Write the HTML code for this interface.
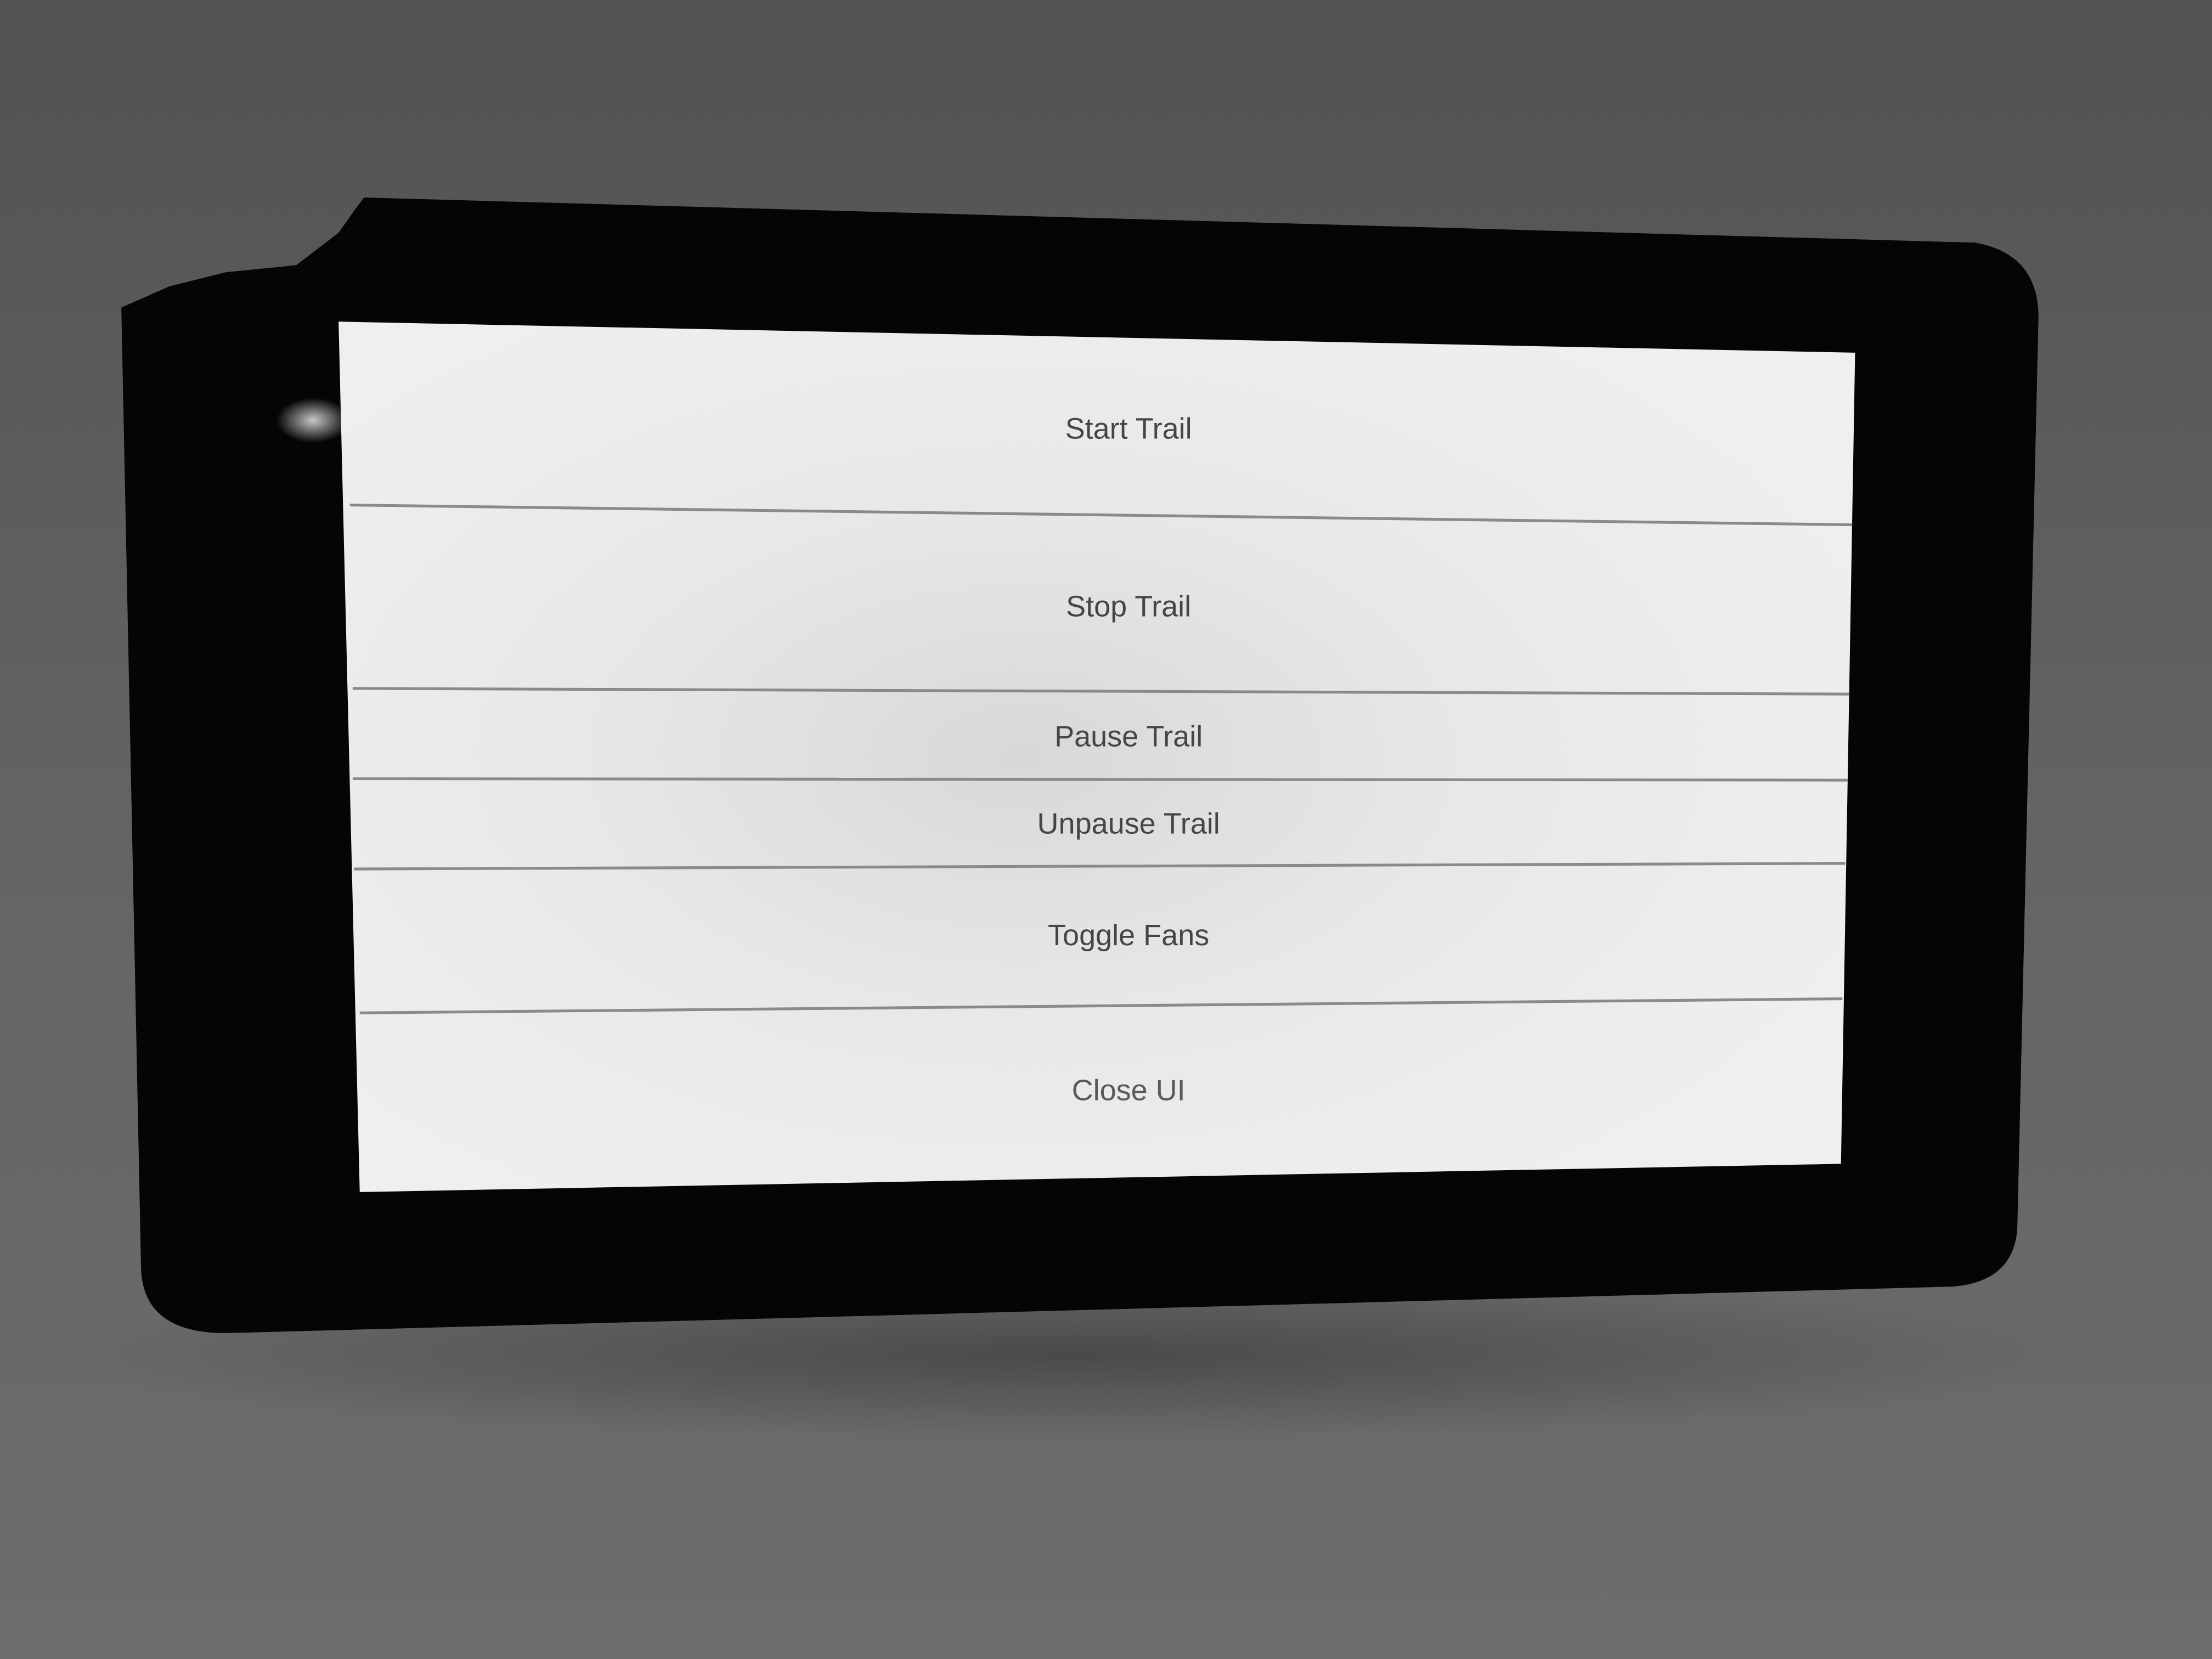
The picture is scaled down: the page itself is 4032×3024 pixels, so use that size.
<!DOCTYPE html>
<html><head><meta charset="utf-8"><style>
html,body{margin:0;padding:0;background:#666;}
svg{display:block;}
</style></head><body>
<svg width="4032" height="3024" viewBox="0 0 1568 1176" preserveAspectRatio="none" xmlns="http://www.w3.org/2000/svg">
<defs>
<linearGradient id="bg" x1="0" y1="0" x2="0" y2="1">
<stop offset="0" stop-color="#525252"/><stop offset="0.5" stop-color="#646464"/><stop offset="1" stop-color="#6c6c6c"/>
</linearGradient>
<radialGradient id="scr" cx="0.45" cy="0.5" r="0.6">
<stop offset="0" stop-color="#d8d8d8"/><stop offset="0.5" stop-color="#e8e8e8"/><stop offset="1" stop-color="#efefef"/>
</radialGradient>
<radialGradient id="shad" cx="0.5" cy="0.5" r="0.5">
<stop offset="0" stop-color="#000" stop-opacity="0.3"/><stop offset="1" stop-color="#000" stop-opacity="0"/>
</radialGradient>
<radialGradient id="glare" cx="0.5" cy="0.5" r="0.5">
<stop offset="0" stop-color="#ddd" stop-opacity="0.9"/><stop offset="1" stop-color="#ddd" stop-opacity="0"/>
</radialGradient>
</defs>
<rect width="1568" height="1176" fill="url(#bg)"/>
<ellipse cx="760" cy="960" rx="720" ry="60" fill="url(#shad)"/>
<path d="M258,140 L1400,172 Q1445,180 1445,225 L1430,870 Q1428,908 1385,912 L160,945 Q102,945 100,900 L86,218 L120,203 L160,193 L210,188 L240,165 L252,148 Z" fill="#050505"/>
<ellipse cx="222" cy="298" rx="26" ry="16" fill="url(#glare)"/>
<path d="M240,228 L1315,250 L1305,825 L255,845 Z" fill="url(#scr)"/>
<g stroke="#8a8a8a" stroke-width="2">
<line x1="248" y1="358" x2="1313" y2="372"/>
<line x1="250" y1="488" x2="1311" y2="492"/>
<line x1="250" y1="552" x2="1310" y2="553"/>
<line x1="251" y1="616" x2="1308" y2="612"/>
<line x1="255" y1="718" x2="1306" y2="708"/>
</g>
<g font-family="Liberation Sans, sans-serif" font-size="21" fill="#454545" text-anchor="middle">
<text x="800" y="311">Start Trail</text>
<text x="800" y="437">Stop Trail</text>
<text x="800" y="529">Pause Trail</text>
<text x="800" y="591">Unpause Trail</text>
<text x="800" y="670">Toggle Fans</text>
<text x="800" y="780" fill="#5a5a5a">Close UI</text>
</g>
</svg>
</body></html>
